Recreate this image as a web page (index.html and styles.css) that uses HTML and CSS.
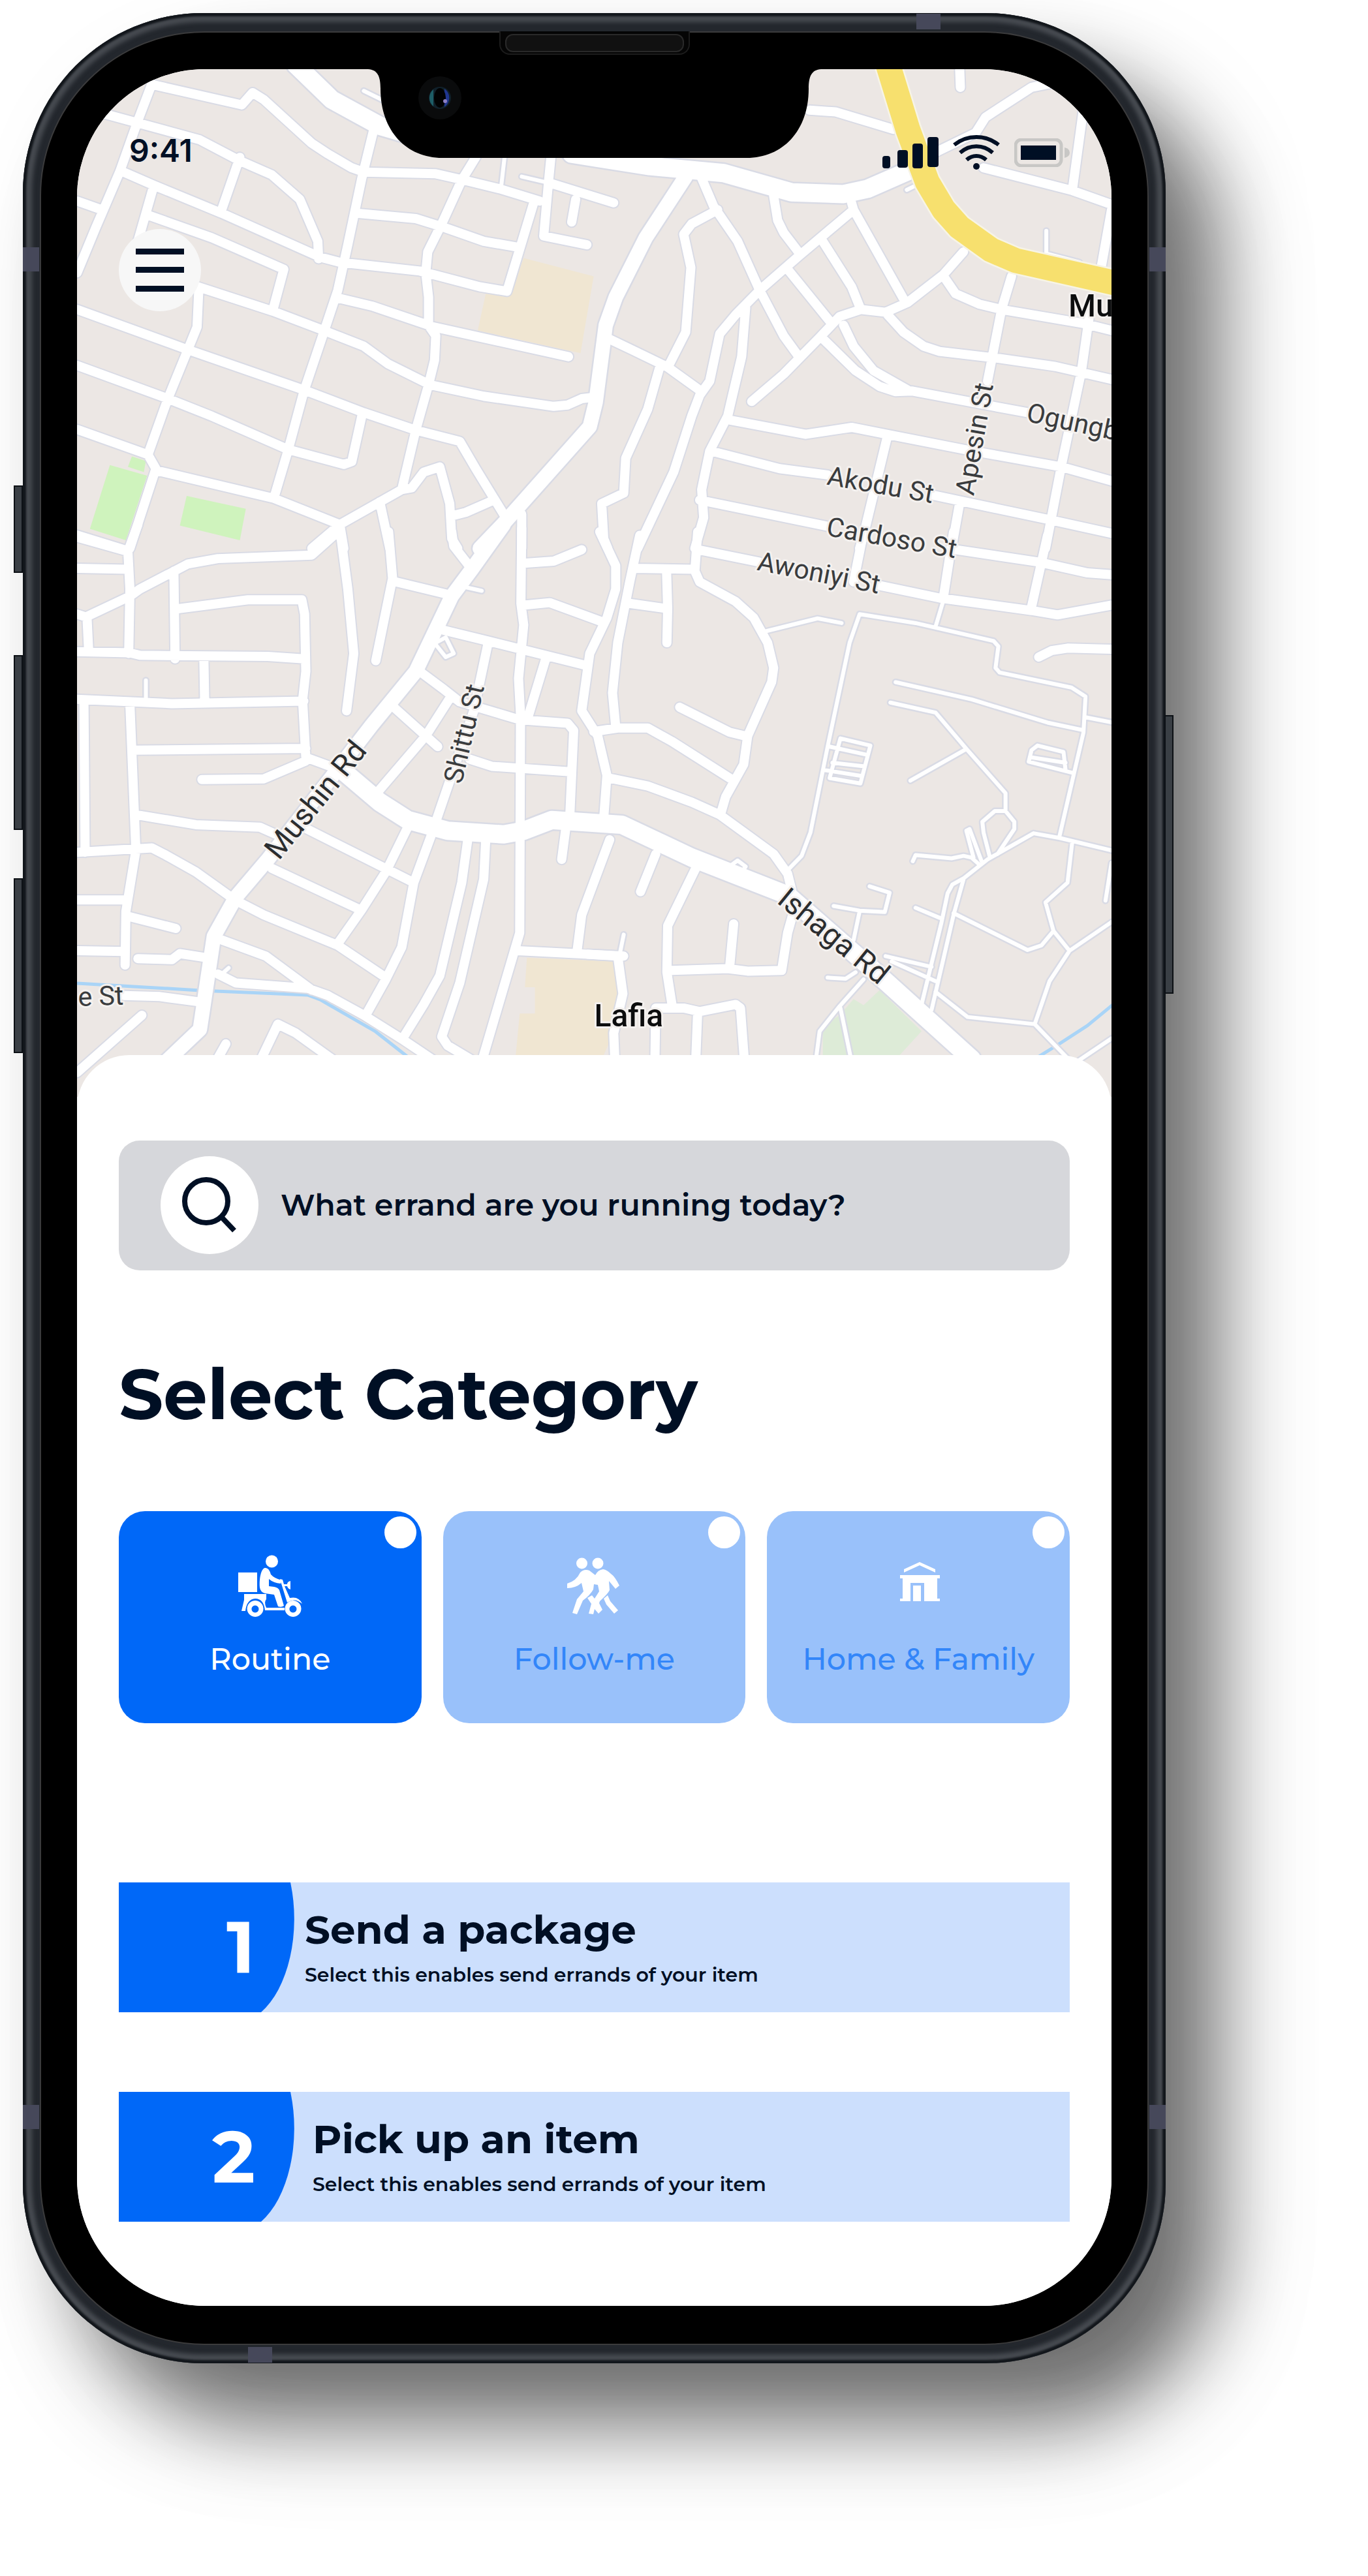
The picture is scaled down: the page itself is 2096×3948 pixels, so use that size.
FILE: index.html
```html
<!DOCTYPE html>
<html lang="en">
<head>
<meta charset="utf-8">
<meta name="viewport" content="width=device-width, initial-scale=1">
<title>Select Category</title>
<link rel="stylesheet" href="styles.css">
</head>
<body>
<div class="phone">
  <span class="key key-mute"></span>
  <span class="key key-up"></span>
  <span class="key key-down"></span>
  <span class="key key-power"></span>
  <span class="band band-left-top"></span>
  <span class="band band-left-bottom"></span>
  <span class="band band-right-top"></span>
  <span class="band band-right-bottom"></span>
  <span class="band band-top"></span>
  <span class="band band-bottom"></span>
  <div class="bezel">
    <span class="speaker"></span>
    <main class="screen">
      <svg class="map" viewBox="118 106 1584 1574" role="img" aria-label="Street map around Mushin Rd and Ishaga Rd">
        <defs>
          <g id="streets">
            <g transform="scale(.6122 .5357)">
              <path d="M380 240L345 345 300 490 255 610 240 650 193 780M385 243L605 300 632 265 660 285 780 410 820 440 880 480 910 492 1090 497 1160 515 1250 540 1350 575M260 325L500 400 600 460 680 500 750 570 795 690 797 740M600 450L553 605M305 490L385 530 555 610 800 735 850 750 1050 775 1200 820 1268 833 1335 580M193 575L255 600M385 530L365 610 345 690M370 615L530 680 710 770 683 885M495 820L683 890 810 945 910 990 970 1040 1075 1100 1210 1133 1385 1162 1420 1158 1455 1140 1490 1135M497 835L493 935 470 1000 420 1140 370 1300 390 1340 325 1568M193 885L470 1000 760 1115 910 1180 1040 1230 1150 1262 1190 1340 1265 1480M193 1045L420 1140 530 1190 720 1285 860 1328 880 1320 905 1190M193 1228L370 1300M390 1345L685 1425 850 1500M935 370L905 510 870 700 845 830 810 950 760 1120 720 1290 685 1425M845 852L930 875 1085 935 1422 1020M897 610L1040 625 1110 650 1210 690 1300 708M1190 450L1155 515 1105 640 1070 720 1065 780 1072 850 1072 930 1090 960 1087 1030 1072 1100 1040 1230 1005 1400M1378 450L1372 520 1360 675 1468 700M1380 525L1535 580M1440 570L1430 635M780 1568L850 1500 1005 1400 1030 1395 1060 1350 1100 1335 1125 1440 1130 1540 1145 1568M1130 1475L1165 1465 1225 1435M850 1500L860 1568M950 1435L975 1568M1305 1470L1305 1568M193 1530L320 1575"/>
            </g>
            <g transform="translate(900 0) scale(.6122 .5357)">
              <path d="M555 315L620 320 765 370M930 190L932 250M1170 236L1110 250 995 335 970 380 880 430 800 475M1240 310L1212 545M990 480L1212 545 1310 585M1310 600L1285 760M285 510L315 590 375 690 430 830 490 960 525 1015M325 600L260 640 240 670 258 765 245 950 205 1040M465 560L475 630 490 665 530 725M660 580L665 600 530 730 430 830 370 900 330 955 305 1090 280 1130 260 1190 215 1350 125 1568M665 600L795 865M585 685L660 820 683 885M500 770L610 925M940 720L890 785 800 865 745 893 683 885 630 905 580 965 490 1070 410 1148M890 790L920 840 980 870 1035 885 1240 925 1310 945M1060 790L1035 885 1000 1090M750 900L790 950 840 990 880 1005 1030 1025 1170 1048 1310 1085M1255 900L1235 1060 1185 1330 1145 1568M640 930L665 990 715 1060 800 1115M585 965L670 1060 730 1105 770 1120 810 1118 1100 1180M395 880L385 1020 350 1190 305 1290 285 1400 290 1480 268 1568M55 970L110 1000 200 1050 285 1120M180 1050L150 1170 95 1310 90 1410 35 1440 40 1540 50 1568M350 1200L545 1242 660 1222 740 1240 940 1285 1185 1335 1310 1375M310 1290L480 1340 600 1358M860 1415L1150 1485 1310 1525M750 1245L690 1530 680 1568M280 1430L600 1505M930 1440L910 1568"/>
            </g>
            <g transform="translate(0 820) scale(.6122 .5485)">
              <path d="M193 5L320 45 345 -30M320 45L325 150 322 330M193 92L320 95M193 220L215 228 325 170 350 150 470 80 545 65 780 55 850 -15M218 235L222 325M435 100L438 345M445 205L620 180 755 180 762 220 765 380 757 460 765 620 850 655M193 325L325 328 350 335 670 338 760 345M510 345L512 465M193 458L430 470 760 463M210 465L213 885M325 470L340 880 315 1050 313 1200M330 600L765 595M505 682L660 680 765 630M340 780L490 808 650 815 700 840M193 885L380 873 410 890 490 940 590 1020 660 1060 845 1145 965 1235M193 1018L315 1018M325 1065L440 1098M193 1160L310 1162M345 1182L430 1185 450 1168 520 1180M310 1285L400 1288 500 1303M355 1340L193 1500M565 1420L540 1470M650 1470L695 1365 740 1390 840 1470M555 1130L665 1175 780 1270M545 1225L590 1250 770 1265 820 1285 910 1340 1010 1410 1090 1470M680 930L900 1045M750 810L1035 970M1020 815L965 940 905 1045 845 1140M1078 840L1035 970 1005 1150 965 1240 920 1330M1170 850L1155 970 1100 1230 1060 1310 1010 1400M1215 850L1210 960 1150 1250 1105 1400 1120 1425 1180 1465M1305 -20L1303 190 1310 250 1297 400 1302 500 1300 1110 1205 1470M850 -20L870 150 885 330 867 490M972 -10L982 120 940 350M990 130L1120 165M1130 -10L1135 30 1170 80M1310 78L1385 72 1455 40M1310 195L1375 188 1510 243M1110 265L1220 295 1465 363M1050 380L1110 430 1150 465 1300 515 1420 525 1435 545 1425 790M985 480L1095 590M1125 455L1065 560 950 710M1220 305L1185 490 1090 800M1365 345L1320 510M1175 625L1230 645 1425 660M1295 1160L1560 1175M1415 820L1405 905M1525 850L1455 1060 1443 1165"/>
            </g>
            <g transform="translate(900 820) scale(.6122 .5485)">
              <path d="M30 -10L70 85 70 150 48 230 5 330 -15 490 25 560 48 670 40 790M130 0L105 130 75 300 62 440 70 535M15 548L75 538 150 538 210 575 365 685M115 92L265 95M197 95L200 205 198 300M105 190L200 205M275 -10L268 100 280 130 370 185 415 230 450 300 465 370 460 410 400 560 390 640 345 730 332 780M230 480L355 550 400 562M55 678L150 700 260 745 330 780 465 890 500 945 510 990M275 40L430 75M730 140L880 175 1110 210 1175 222 1310 195M690 -10L665 130M915 -10L890 170M920 40L1130 75 1250 105 1310 110M1150 0L1110 200M1128 340L1160 322 1200 315 1310 318M170 890L132 995M270 930L200 1090 198 1220 212 1320M210 1215L350 1210 400 1217 485 1215 500 1110 515 1050M365 1085L355 1205M0 1170L75 1175 88 1280 65 1390 68 1470M168 1470L170 1320 240 1320 280 1330 370 1310 382 1320 392 1470M275 1330L270 1470"/>
            </g>
          </g>
          <g id="lanes">
            <g transform="scale(.6122 .5357)">
              <path d="M1262 450L1253 540M1305 505L1380 525M910 260L955 285"/>
            </g>
            <g transform="translate(900 0) scale(.6122 .5357)">
              <path d="M1147 660L1147 725 1230 750M798 543L830 525"/>
            </g>
            <g transform="translate(0 820) scale(.6122 .5485)">
              <path d="M365 405L365 455M555 1225L572 1208M1165 145L1205 155M1090 300L1115 285 1135 330 1115 340 1090 305"/>
            </g>
            <g transform="translate(900 820) scale(.6122 .5485)">
              <path d="M445 268L575 232 635 245M890 180L870 255M500 935L535 895 557 830 600 590 655 300 680 220 820 245 1015 295 1027 310 1020 370 1030 383 1210 425 1245 450 1240 550 1180 840M1245 508L1310 522M770 410L960 458 1150 523 1235 543M757 467L870 495 950 600 1045 720 1045 770 1067 800 1067 820 1025 890M945 598L807 685M1045 770L1018 770 987 800 990 830 1005 895M985 910L955 820 947 825 965 900M813 910L820 893 910 902 940 895 960 900 980 920M1310 880L1180 845 1115 832 1000 905 940 958 912 975 900 1000 885 1080 835 1310M940 960L915 1060 860 1325M820 1040L880 1068M915 1055L1100 1158 1135 1145 1165 1105M1212 855L1200 970 1145 1025 1165 1105 1205 1160 1310 1080M1205 1160L1155 1245 1118 1365 1200 1460M1118 1365L950 1345 870 1275M705 980L755 998 743 1052 680 1048 615 1035M680 1050L665 1130M745 1175L860 1205M760 1190L870 1245M600 1235L645 1238 670 1220M690 1240L630 1315 580 1385 570 1470M632 1320L660 1470M632 567L707 587 682 693 605 678ZM605 590L695 612M612 635L692 645M590 655L685 672M1103 632L1110 600 1125 587 1190 605 1195 655M1110 620L1195 635M1103 632L1212 663M1310 915L1295 1020M1310 1405L1230 1465M360 920L375 908 395 925 385 940M90 1115L80 1170"/>
            </g>
          </g>
          <g id="roads">
            <g transform="translate(900 0) scale(.6122 .5357)">
              <path d="M245 505L145 680 70 850 45 930 20 1150 5 1220 -205 1490 -270 1568"/>
            </g>
            <g transform="translate(0 820) scale(.6122 .5485)">
              <path d="M1260 -30L1180 95 1130 170 1040 380 930 530 840 660 670 905 590 1010 535 1120 500 1380 415 1470"/>
            </g>
          </g>
          <g id="avenues">
            <g transform="scale(.6122 .5357)">
              <path d="M740 185L830 285 950 360 1010 380"/>
            </g>
            <g transform="translate(900 0) scale(.6122 .5357)">
              <path d="M-40 440L155 475 340 495 510 550 640 555 700 540 780 500 820 480"/>
            </g>
            <g transform="translate(0 820) scale(.6122 .5485)">
              <path d="M860 660L950 745 1020 795 1120 825 1260 835 1310 825 1380 795 1555 808 1730 900 1970 1005 2170 1200 2430 1462"/>
            </g>
          </g>
          <path id="highway" d="M1360 100L1390 198 1420 279 1445 321 1469 348 1518 383 1555 399 1710 434"/>
        </defs>

        <path class="land" d="M118 106H1702V1680H118Z"/>
        <g class="park" transform="scale(.6122 .5357)">
          <path d="M275 1330L368 1360 315 1545 225 1512ZM330 1305L365 1318 360 1350 320 1335ZM467 1418L615 1455 600 1545 450 1503Z"/>
        </g>
        <path class="campus" transform="scale(.6122 .5357)" d="M1310 738L1485 790 1452 1010 1195 945 1215 840 1275 845Z"/>
        <path class="campus" transform="translate(0 820) scale(.6122 .5485)" d="M1318 1180L1540 1190 1550 1300 1530 1400 1510 1452H1290L1300 1335H1338V1262H1313Z"/>
        <path class="lawn" transform="translate(900 820) scale(.6122 .5485)" d="M665 1295L690 1312 730 1270 835 1385 780 1452H588V1370L630 1340Z"/>
        <g class="water">
          <path d="M118 1506L306 1517 471 1524 490 1531 575 1580 626 1620M1588 1620L1622 1599 1665 1571 1704 1539"/>
        </g>

        <use href="#lanes" class="edge lane"/>
        <use href="#streets" class="edge street"/>
        <use href="#roads" class="edge road"/>
        <use href="#avenues" class="edge avenue"/>
        <use href="#lanes" class="face lane"/>
        <use href="#streets" class="face street"/>
        <use href="#roads" class="face road"/>
        <use href="#avenues" class="face avenue"/>
        <use href="#highway" class="highway-edge"/>
        <use href="#highway" class="highway-face"/>

        <g class="street-name">
          <text transform="translate(1265 742) rotate(10)">Akodu St</text>
          <text transform="translate(1264 820) rotate(10)">Cardoso St</text>
          <text transform="translate(1158 873) rotate(11)">Awoniyi St</text>
          <text transform="translate(1491 760) rotate(-80)">Apesin St</text>
          <text transform="translate(1570 645) rotate(12)">Ogungb</text>
          <text transform="translate(707 1202) rotate(-77)">Shittu St</text>
          <text transform="translate(120 1541) rotate(-2)">e St</text>
        </g>
        <g class="road-name">
          <text transform="translate(427 1319) rotate(-51)">Mushin Rd</text>
          <text transform="translate(1188 1382) rotate(39)">Ishaga Rd</text>
        </g>
        <g class="place-name">
          <text x="910" y="1572">Lafia</text>
          <text x="1636" y="485">Mu</text>
        </g>
      </svg>

      <svg class="notch" viewBox="0 0 694 136" aria-hidden="true">
        <path d="M0 0H694C680 1 675 10 675 30C675 95 635 136 580 136H114C59 136 19 95 19 30C19 10 14 1 0 0Z"/>
        <circle cx="110" cy="44" r="33" fill="#0a0b0c"/>
        <circle cx="110" cy="44" r="17" fill="#10202a"/>
        <path d="M100 31A17 17 0 0 0 100 57Z" fill="#1d5d66"/>
        <path d="M117 30A17 17 0 0 1 117 58Z" fill="#20368f"/>
        <ellipse cx="110" cy="44" rx="9" ry="15" fill="#010203"/>
        <circle cx="118" cy="49" r="3" fill="#8b7fc4"/>
      </svg>

      <header class="overlay">
        <div class="status">
          <time class="clock">9:41</time>
          <div class="status-icons">
            <svg width="86" height="48" viewBox="0 0 86 48" aria-label="Signal"><rect x="0" y="29" width="12" height="19" rx="4"/><rect x="23" y="20" width="16" height="27" rx="4"/><rect x="46" y="10" width="16" height="38" rx="4"/><rect x="69" y="0" width="17" height="46" rx="4"/></svg>
            <svg width="72" height="54" viewBox="0 0 72 54" aria-label="Wi-Fi"><g fill="none" stroke="#000f24" stroke-width="6"><path d="M2 15C22-1 50-1 70 15M11 27C26 14 46 14 61 27M21 38C30 30 42 30 51 38"/></g><circle cx="36" cy="48" r="5"/></svg>
            <svg width="85" height="44" viewBox="0 0 85 44" aria-label="Battery"><rect x="2" y="2" width="70" height="40" rx="9" fill="none" stroke="#c8c7c5" stroke-width="5"/><path d="M77 14Q85 16 85 22T77 30Z" fill="#c8c7c5"/><rect x="10" y="11" width="54" height="22"/></svg>
          </div>
        </div>
        <button class="menu" type="button" aria-label="Menu">
          <svg width="74" height="66" viewBox="0 0 74 66"><path d="M0 0H74V9H0ZM0 28H74V37H0ZM0 57H74V66H0Z"/></svg>
        </button>
      </header>

      <section class="sheet">
        <form class="search">
          <label class="search-icon" for="errand" aria-label="Search">
            <svg width="84" height="86" viewBox="0 0 84 86"><circle cx="37" cy="37" r="33"/><path d="M61 62L80 82"/></svg>
          </label>
          <input id="errand" type="text" placeholder="What errand are you running today?">
        </form>

        <h1>Select Category</h1>
        <div class="categories" role="radiogroup" aria-label="Category">
          <label class="category">
            <input type="radio" name="category" checked>
            <svg viewBox="0 0 120 120" aria-hidden="true">
              <circle cx="62.500" cy="22" r="9.500"/>
              <path d="M11 39H40V69H11ZM20 72H54V80Q50 84 54 93H82V97H52Q50 79 37 79Q24 80 22 98H16L20 81Z"/>
              <path d="M52 32C46 33 43 48 44 62Q45 69 52 71L66 73 72 91Q77 93 81 90L74 66Q72 62 66 61L58 60V49Q65 55 76 56L78 51Q66 48 61 42Q58 31 52 32Z"/>
              <path d="M75 49L79 50 81 57H86Q86 53 91 52V65Q87 64 86 60H82L90 78Q104 75 109 87Q98 77 86 85L77 56Z"/>
              <path fill-rule="evenodd" d="M37 82a12.500 12.500 0 1 0 .1 0ZM37 89.500a5.500 5.500 0 1 1-.1 0ZM95 82a12.500 12.500 0 1 0 .1 0ZM95 89.500a5.500 5.500 0 1 1-.1 0Z"/>
            </svg>
            <span>Routine</span>
          </label>
          <label class="category">
            <input type="radio" name="category">
            <svg viewBox="-4 0 120 120" aria-hidden="true">
              <circle cx="37.500" cy="25" r="8.500"/><circle cx="62" cy="25" r="8.500"/>
              <path d="M15 56Q29 52 35 39Q41 33 49 36L58 43Q62 35 70 34Q76 35 82 41Q88 45 95 59L89 64 79 52 80 66Q78 71 65 83L64 86 69 96 63 102 57 95 55 103 48 102 52 87 46 78 53 74 57 79 64 68 62 58 56 57 55 65Q50 74 39 82L30 103 23 101 30 80 40 68 37 55Q28 63 15 63Z"/>
              <path d="M71 79L77 74 81 83 93 97 87 102 75 88Z"/>
            </svg>
            <span>Follow-me</span>
          </label>
          <label class="category">
            <input type="radio" name="category">
            <svg viewBox="0 0 120 120" aria-hidden="true">
              <path d="M38 34L62 23 86 34V39L62 28 38 39ZM32 43H93V48H89V79H93V83H69V55H48V83H32V79H36V48H32ZM52 59H64V83H52Z"/>
            </svg>
            <span>Home &amp; Family</span>
          </label>
        </div>

        <ol class="errands">
          <li>
            <a class="errand" href="#send">
              <span class="number">1</span>
              <span class="details">
                <strong>Send a package</strong>
                <small>Select this enables send errands of your item</small>
              </span>
            </a>
          </li>
          <li>
            <a class="errand errand-pickup" href="#pickup">
              <span class="number">2</span>
              <span class="details">
                <strong>Pick up an item</strong>
                <small>Select this enables send errands of your item</small>
              </span>
            </a>
          </li>
        </ol>
      </section>
    </main>
  </div>
</div>
</body>
</html>
```
FILE: styles.css
```css
* {
  box-sizing: border-box;
}

body {
  margin: 0;
  padding: 20px 310px 328px 35px;
  background: #fff;
  color: #000f24;
  font-family: Montserrat, Inter, "Liberation Sans", sans-serif;
}

/* Handset */
.phone {
  position: relative;
  padding: 28px 26px;
  border-radius: 276px;
  background: #23272d;
  box-shadow:
    inset 0 0 3px 5px #12161b,
    inset 0 0 6px 14px #474b51,
    90px 110px 200px rgba(0, 0, 0, 0.06),
    80px 92px 124px rgba(0, 0, 0, 0.54);
}

.bezel {
  position: relative;
  padding: 56px 55px 58px;
  border: 2px solid #3b3b3c;
  border-radius: 252px;
  background: #000;
}

.screen {
  position: relative;
  overflow: hidden;
  border-radius: 196px;
  background: #fff;
}

.key {
  position: absolute;
  left: -14px;
  width: 14px;
  border: 2px solid #0c1015;
  background: #3a3f45;
}

.key-mute {
  top: 724px;
  height: 134px;
}

.key-up {
  top: 984px;
  height: 268px;
}

.key-down {
  top: 1326px;
  height: 268px;
}

.key-power {
  top: 1076px;
  right: -12px;
  left: auto;
  height: 427px;
}

.band {
  position: absolute;
  width: 25px;
  height: 37px;
  background: #46485a;
}

.band-left-top {
  top: 359px;
  left: 0;
}

.band-left-bottom {
  bottom: 359px;
  left: 0;
}

.band-right-top {
  top: 359px;
  right: 0;
}

.band-right-bottom {
  right: 0;
  bottom: 359px;
}

.band-top {
  top: 1px;
  right: 345px;
  width: 37px;
  height: 24px;
}

.band-bottom {
  bottom: 1px;
  left: 345px;
  width: 37px;
  height: 24px;
}

.speaker {
  position: absolute;
  top: -2px;
  left: 50%;
  width: 292px;
  height: 36px;
  border: 2px solid #1c1c1c;
  border-top: 0;
  border-radius: 0 0 16px 16px;
  background: #050505;
  transform: translateX(-50%);
}

.speaker::before {
  content: "";
  display: block;
  height: 24px;
  margin: 4px 7px;
  border: 2px solid #292929;
  border-radius: 12px;
  background: #111;
}

/* Map */
.map {
  display: block;
  width: 100%;
  height: auto;
}

.land {
  fill: #ece7e4;
}

.park {
  fill: #cff3bd;
}

.campus {
  fill: #f0e6d2;
}

.lawn {
  fill: #ddebd7;
}

.water {
  fill: none;
  stroke: #a9d4f7;
  stroke-width: 5px;
}

.edge,
.face {
  fill: none;
  stroke-linecap: round;
  stroke-linejoin: round;
}

.edge {
  stroke: #d9dbe5;
}

.face {
  stroke: #fff;
}

.map defs path {
  vector-effect: non-scaling-stroke;
}

.edge.lane {
  stroke-width: 11px;
}

.face.lane {
  stroke-width: 6px;
}

.edge.street {
  stroke-width: 18px;
}

.face.street {
  stroke-width: 14px;
}

.edge.road {
  stroke-width: 27px;
}

.face.road {
  stroke-width: 22px;
}

.edge.avenue {
  stroke-width: 33px;
}

.face.avenue {
  stroke-width: 28px;
}

.highway-edge,
.highway-face {
  fill: none;
  stroke-linejoin: round;
}

.highway-edge {
  stroke: #f7f4e6;
  stroke-width: 43px;
}

.highway-face {
  stroke: #f7e06e;
  stroke-width: 38px;
}

.street-name,
.road-name,
.place-name {
  font-family: Roboto, "Open Sans", sans-serif;
  paint-order: stroke;
  stroke: #f4f1ef;
  stroke-linejoin: round;
  stroke-width: 6px;
}

.street-name {
  fill: #3a3c3e;
  font-size: 41px;
}

.road-name {
  fill: #2b2d2f;
  font-size: 46px;
}

.place-name {
  fill: #0c0d0e;
  font-size: 48px;
  font-weight: 500;
}

/* Overlays at the top of the screen */
.notch {
  position: absolute;
  top: 0;
  left: 50%;
  width: 694px;
  height: 136px;
  transform: translateX(-50%);
}

.overlay {
  position: absolute;
  top: 0;
  right: 0;
  left: 0;
  padding: 95px 64px 0;
}

.status {
  display: flex;
  align-items: flex-end;
  justify-content: space-between;
  padding-left: 16px;
}

.clock {
  font-family: Inter, sans-serif;
  font-size: 48px;
  font-weight: 600;
  line-height: 60px;
}

.status-icons {
  display: flex;
  align-items: center;
  gap: 22px;
}

.overlay svg {
  fill: #000f24;
}

.menu {
  display: grid;
  place-items: center;
  width: 126px;
  height: 126px;
  margin-top: 90px;
  padding: 0;
  border: 0;
  border-radius: 50%;
  background: #f7f7f7;
}

/* Bottom sheet */
.sheet {
  position: relative;
  margin-top: -64px;
  padding: 131px 64px 129px;
  border-radius: 80px 80px 0 0;
  background: #fff;
}

.search {
  display: flex;
  align-items: center;
  gap: 34px;
  height: 199px;
  padding: 0 64px;
  border-radius: 32px;
  background: #d6d7db;
}

.search-icon {
  display: grid;
  flex: none;
  place-items: center;
  width: 150px;
  height: 150px;
  border-radius: 50%;
  background: #fff;
}

.search-icon svg {
  fill: none;
  stroke: #000f24;
  stroke-width: 8px;
}

.search input {
  flex: 1;
  min-width: 0;
  padding: 0;
  border: 0;
  outline: 0;
  background: none;
  color: inherit;
  font: inherit;
  font-size: 46px;
  font-weight: 600;
  line-height: 60px;
}

.search input::placeholder {
  color: inherit;
  opacity: 1;
}

h1 {
  margin: 122px 0 111px;
  font-size: 107px;
  font-weight: 700;
  line-height: 136px;
}

.categories {
  display: grid;
  grid-template-columns: repeat(3, 1fr);
  gap: 33px;
}

.category {
  position: relative;
  display: flex;
  flex-direction: column;
  align-items: center;
  gap: 22px;
  height: 325px;
  padding-top: 55px;
  border-radius: 40px;
  background: #99c1fa;
  color: #3386f9;
  font-size: 46px;
  font-weight: 500;
  line-height: 60px;
  white-space: nowrap;
}

.category:has(input:checked) {
  background: #0068f8;
  color: #fff;
}

.category input {
  position: absolute;
  top: 8px;
  right: 8px;
  width: 49px;
  height: 49px;
  margin: 0;
  border-radius: 50%;
  appearance: none;
  background: #fff;
}

.category svg {
  width: 120px;
  height: 120px;
  fill: #fff;
}

.errands {
  display: grid;
  gap: 122px;
  margin: 244px 0 0;
  padding: 0;
  list-style: none;
}

.errand {
  display: flex;
  align-items: center;
  gap: 16px;
  height: 199px;
  background: #ccdffd;
  color: inherit;
  text-decoration: none;
}

.errand-pickup {
  gap: 28px;
}

/* The right edge is a slice of a tall ellipse */
.number {
  display: flex;
  align-items: center;
  justify-content: flex-end;
  width: 269px;
  height: 100%;
  padding-right: 60px;
  background: #0068f8;
  clip-path: path("M0 0H263A92 160 0 0 1 218 199H0Z");
  color: #fff;
  font-size: 112px;
  font-weight: 700;
  line-height: 136px;
}

.details {
  display: grid;
  gap: 14px;
}

.details strong {
  font-size: 61px;
  font-weight: 700;
  line-height: 72px;
}

.details small {
  font-size: 30px;
  font-weight: 600;
  line-height: 40px;
}
```
